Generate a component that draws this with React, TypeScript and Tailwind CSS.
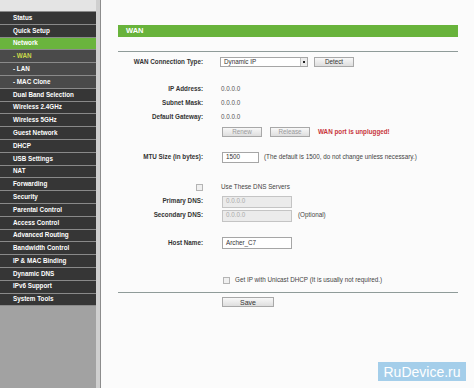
import React from "react";

const menu = [
  { label: "Status" },
  { label: "Quick Setup" },
  { label: "Network", active: true },
  { label: "- WAN", sub: true, current: true },
  { label: "- LAN", sub: true },
  { label: "- MAC Clone", sub: true },
  { label: "Dual Band Selection" },
  { label: "Wireless 2.4GHz" },
  { label: "Wireless 5GHz" },
  { label: "Guest Network" },
  { label: "DHCP" },
  { label: "USB Settings" },
  { label: "NAT" },
  { label: "Forwarding" },
  { label: "Security" },
  { label: "Parental Control" },
  { label: "Access Control" },
  { label: "Advanced Routing" },
  { label: "Bandwidth Control" },
  { label: "IP & MAC Binding" },
  { label: "Dynamic DNS" },
  { label: "IPv6 Support" },
  { label: "System Tools" },
];

function Sidebar() {
  return (
    <div className="flex h-full">
      <div className="w-[96px] h-full bg-[#a2a2a2] flex flex-col">
        <div className="h-[11px] bg-[#e4e4e4]" />
        <div className="flex flex-col gap-[1px] bg-[#8a8a8a] py-[1px]">
          {menu.map((m, i) => (
            <div
              key={i}
              className={
                "h-[11.8px] flex items-center pl-[13px] text-[6.3px] font-bold leading-none " +
                (m.active
                  ? "bg-[#6ab43d] text-white"
                  : m.sub
                  ? "bg-[#4a4a4a] " + (m.current ? "text-[#c9d84a]" : "text-white")
                  : "bg-[#363636] text-white")
              }
            >
              {m.label}
            </div>
          ))}
        </div>
      </div>
      <div className="w-[4px] h-full bg-[#cfcfcf]" />
      <div className="w-[1px] h-full bg-[#8c8c8c]" />
    </div>
  );
}

function Label({ children }: { children: React.ReactNode }) {
  return (
    <div className="w-[85px] shrink-0 text-right font-bold text-[#333]">
      {children}
    </div>
  );
}

function Btn({
  children,
  w,
  disabled,
}: {
  children: React.ReactNode;
  w: string;
  disabled?: boolean;
}) {
  return (
    <div
      className={
        w +
        " h-[10px] flex items-center justify-center border border-[#a8a8a8] bg-gradient-to-b from-[#f8f8f8] to-[#dedede] " +
        (disabled ? "text-[#9a9a9a]" : "text-[#333]")
      }
    >
      {children}
    </div>
  );
}

function Check({ className }: { className?: string }) {
  return (
    <div
      className={
        "w-[7px] h-[7px] border border-[#b4b4b4] bg-[#f0f0f0] " + (className ?? "")
      }
    />
  );
}

export default function App() {
  return (
    <div className="w-[474px] h-[388px] flex overflow-hidden bg-[#fbfbfb] font-['Liberation_Sans',Arial,sans-serif] text-[6.3px] leading-none relative">
      <Sidebar />
      <div className="flex-1 pl-[17px] pt-[25px] flex flex-col">
        <div className="w-[340px] h-[12px] bg-[#68b33b] flex items-center pl-[8px] text-white font-bold text-[7.5px]">
          WAN
        </div>
        <div className="w-[340px] h-[1px] bg-[#8f9b99] mt-[14px]" />

        <div className="flex items-center h-[10px] mt-[5px]">
          <Label>WAN Connection Type:</Label>
          <div className="ml-[17px] w-[88px] h-[10px] border border-[#a6a6a6] bg-white flex items-center justify-between pl-[3px] text-[#333]">
            <span>Dynamic IP</span>
            <div className="w-[7px] h-[8px] border-l border-[#c0c0c0] bg-[#ececec] flex items-center justify-center">
              <div className="w-[2px] h-[2px] bg-[#222]" />
            </div>
          </div>
          <div className="ml-[6px]">
            <Btn w="w-[40px]">Detect</Btn>
          </div>
        </div>

        <div className="mt-[15px] flex flex-col">
          {[
            ["IP Address:", "0.0.0.0"],
            ["Subnet Mask:", "0.0.0.0"],
            ["Default Gateway:", "0.0.0.0"],
          ].map(([l, v]) => (
            <div key={l} className="flex items-center h-[14px]">
              <Label>{l}</Label>
              <div className="ml-[18px] text-[#555]">{v}</div>
            </div>
          ))}
        </div>

        <div className="flex items-center h-[10px] mt-[3px]">
          <div className="w-[85px] shrink-0" />
          <div className="ml-[19px] flex items-center gap-[8px]">
            <Btn w="w-[40px]" disabled>
              Renew
            </Btn>
            <Btn w="w-[40px]" disabled>
              Release
            </Btn>
            <span className="text-[#c8333a] font-bold">WAN port is unplugged!</span>
          </div>
        </div>

        <div className="flex items-center h-[11px] mt-[15px]">
          <Label>MTU Size (in bytes):</Label>
          <div className="ml-[19px] w-[37px] h-[11px] border border-[#a6a6a6] bg-white flex items-center pl-[3px] text-[#333]">
            1500
          </div>
          <span className="ml-[5px] text-[#444]">
            (The default is 1500, do not change unless necessary.)
          </span>
        </div>

        <div className="flex items-center h-[12px] mt-[18px]">
          <div className="w-[85px] shrink-0 flex justify-end">
            <Check />
          </div>
          <span className="ml-[18px] text-[#444]">Use These DNS Servers</span>
        </div>

        <div className="flex items-center h-[13px] mt-[2px]">
          <Label>Primary DNS:</Label>
          <div className="ml-[19px] w-[70px] h-[12px] border border-[#c4c4c4] bg-[#ebebeb] flex items-center pl-[3px] text-[#aaa]">
            0.0.0.0
          </div>
        </div>
        <div className="flex items-center h-[13px] mt-[1px]">
          <Label>Secondary DNS:</Label>
          <div className="ml-[19px] w-[70px] h-[12px] border border-[#c4c4c4] bg-[#ebebeb] flex items-center pl-[3px] text-[#aaa]">
            0.0.0.0
          </div>
          <span className="ml-[6px] text-[#444]">(Optional)</span>
        </div>

        <div className="flex items-center h-[12px] mt-[15px]">
          <Label>Host Name:</Label>
          <div className="ml-[19px] w-[70px] h-[12px] border border-[#a6a6a6] bg-white flex items-center pl-[3px] text-[#333]">
            Archer_C7
          </div>
        </div>

        <div className="flex items-center h-[12px] mt-[25px]">
          <div className="w-[85px] shrink-0" />
          <Check className="ml-[20px]" />
          <span className="ml-[5px] text-[#444]">
            Get IP with Unicast DHCP (It is usually not required.)
          </span>
        </div>

        <div className="w-[340px] h-[1px] bg-[#8f9b99] mt-[6px]" />

        <div className="flex items-center h-[10px] mt-[4px]">
          <div className="w-[85px] shrink-0" />
          <div className="ml-[19px]">
            <Btn w="w-[52px]">
              <span className="text-[7px]">Save</span>
            </Btn>
          </div>
        </div>
      </div>

      <div className="absolute left-[378px] top-[362px] w-[88px] h-[19px] bg-[#8ec3e6]/80 flex items-center justify-center text-white text-[14px]">
        RuDevice.ru
      </div>
    </div>
  );
}
